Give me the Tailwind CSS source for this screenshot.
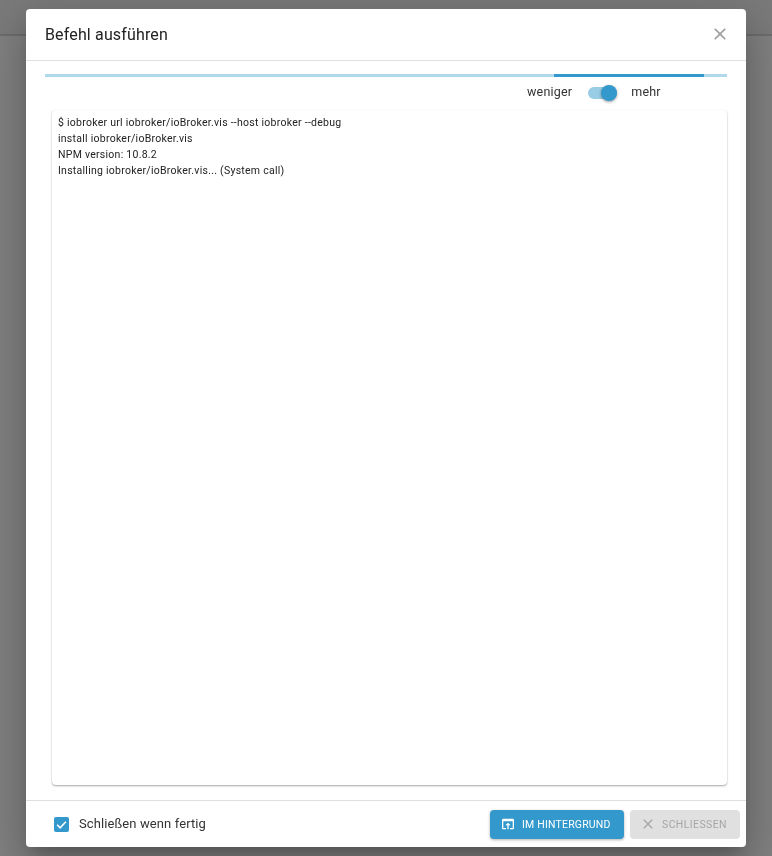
<!DOCTYPE html>
<html lang="de">

<head>
    <meta charset="UTF-8">
    <title>Befehl ausführen</title>
    <script src="https://cdn.jsdelivr.net/npm/@tailwindcss/browser@4"></script>
</head>

<body class="w-[772px] h-[856px] overflow-hidden bg-[#808080] font-['Roboto',sans-serif]">

    <!-- Backdrop with the page toolbar behind it -->
    <div class="h-[36px] bg-[#7a7a7a] border-b-2 border-[#6c6c6c]"></div>

    <!-- Dialog -->
    <div class="fixed left-[26px] top-[9px] w-[720px] h-[838px] bg-white rounded-[4px] flex flex-col shadow-[0_11px_15px_-7px_rgba(0,0,0,0.2),0_24px_38px_3px_rgba(0,0,0,0.14),0_9px_46px_8px_rgba(0,0,0,0.12)]">

        <!-- Title -->
        <div class="h-[52px] shrink-0 border-b border-[#e0e0e0] flex items-center justify-between pl-[19px] pr-[16px]">
            <h2 class="text-[16px] leading-[50px] tracking-[0.15px] text-[#222]">Befehl ausführen</h2>
            <svg class="w-[20px] h-[20px] -mt-[1px]" viewBox="0 0 24 24" fill="#9e9e9e">
                <path d="M19 6.41 17.59 5 12 10.59 6.41 5 5 6.41 10.59 12 5 17.59 6.41 19 12 13.41 17.59 19 19 17.59 13.41 12z"></path>
            </svg>
        </div>

        <!-- Content -->
        <div class="flex-1 flex flex-col min-h-0 pl-[19px] pr-[19px]">
            <div class="mt-[13px] h-[3px] bg-[#b1d9ee] relative shrink-0">
                <div class="absolute left-[509px] w-[150px] h-[3px] bg-[#3399cc]"></div>
            </div>

            <!-- Switch -->
            <div class="h-[31px] mb-[2px] shrink-0 flex items-center text-[12.5px] tracking-[0.2px] text-[#333] pl-[482px]">
                <span>weniger</span>
                <div class="relative w-[29px] h-[12px] ml-[16px] mr-[14px] bg-[#99cce5] rounded-full">
                    <div class="absolute right-0 -top-[2px] w-[16px] h-[16px] rounded-full bg-[#3399cc] shadow-[0_1px_3px_rgba(0,0,0,0.4)]"></div>
                </div>
                <span>mehr</span>
            </div>

            <!-- Log output -->
            <div class="ml-[7px] h-[675px] shrink-0 bg-white rounded-[4px] pl-[6px] pt-[5px] text-[10.5px] leading-[16px] tracking-[0.26px] text-[#222] shadow-[0_1px_2px_rgba(0,0,0,0.35),0_0_1px_rgba(0,0,0,0.06)]">
                <div>$ iobroker url iobroker/ioBroker.vis --host iobroker --debug</div>
                <div>install iobroker/ioBroker.vis</div>
                <div>NPM version: 10.8.2</div>
                <div>Installing iobroker/ioBroker.vis... (System call)</div>
            </div>
        </div>

        <!-- Footer -->
        <div class="h-[47px] shrink-0 border-t border-[#e0e0e0] flex items-center pl-[28px] pr-[6px]">
            <div class="w-[15px] h-[15px] rounded-[2px] bg-[#3399cc] flex items-center justify-center">
                <svg class="w-[13px] h-[13px]" viewBox="0 0 24 24" fill="none" stroke="#fff" stroke-width="3">
                    <path d="M4 12.5 9.5 18 20 7"></path>
                </svg>
            </div>
            <span class="ml-[10px] text-[13px] tracking-[0.1px] text-[#333]">Schließen wenn fertig</span>

            <button class="ml-auto w-[134px] h-[29px] rounded-[4px] bg-[#3399cc] text-white text-[10.5px] tracking-[0.2px] flex items-center pl-[10px] shadow-[0_1px_3px_rgba(0,0,0,0.3)]">
                <svg class="w-[16px] h-[16px] mr-[6px]" viewBox="0 0 24 24" fill="#fff">
                    <path d="M19 4H5c-1.11 0-2 .9-2 2v12c0 1.1.89 2 2 2h4v-2H5V8h14v10h-4v2h4c1.1 0 2-.9 2-2V6c0-1.1-.89-2-2-2zm-7 6-4 4h3v6h2v-6h3l-4-4z"></path>
                </svg>
                <span class="mt-[1px]">IM HINTERGRUND</span>
            </button>
            <button class="ml-[6px] w-[110px] h-[29px] rounded-[4px] bg-[#e0e0e0] text-[#a6a6a6] text-[10.5px] tracking-[0.4px] flex items-center pl-[10px]">
                <svg class="w-[16px] h-[16px] mr-[6px]" viewBox="0 0 24 24" fill="#a6a6a6">
                    <path d="M19 6.41 17.59 5 12 10.59 6.41 5 5 6.41 10.59 12 5 17.59 6.41 19 12 13.41 17.59 19 19 17.59 13.41 12z"></path>
                </svg>
                <span class="mt-[1px]">SCHLIESSEN</span>
            </button>
        </div>
    </div>

</body>

</html>
